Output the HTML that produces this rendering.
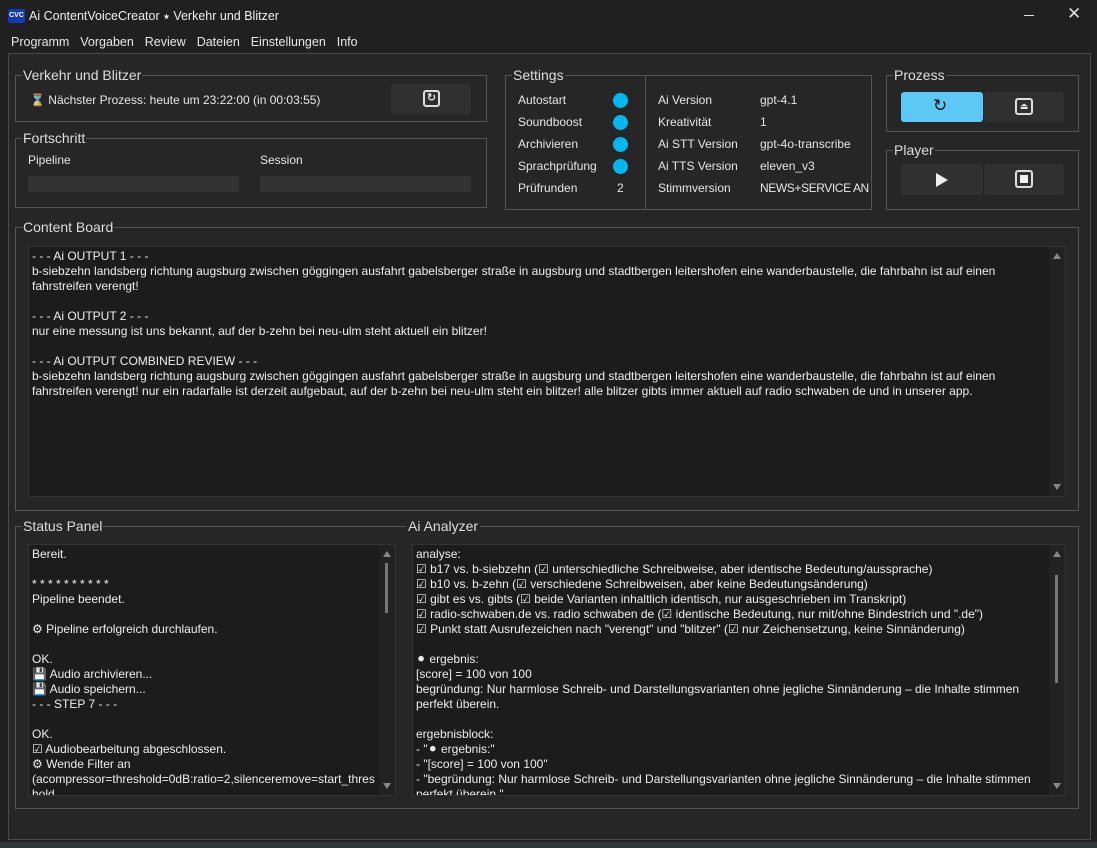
<!DOCTYPE html>
<html><head><meta charset="utf-8"><style>
*{box-sizing:border-box;margin:0;padding:0}
body{width:1097px;height:848px;background:#2e3836;font-family:"Liberation Sans","DejaVu Sans",sans-serif;color:#e6e6e6;font-size:12px;position:relative;overflow:hidden}
.a{position:absolute}
#win{left:0;top:0;width:1097px;height:842px;background:#202020}
#main{left:8px;top:53px;width:1083px;height:787px;background:#262626;border:1px solid #4a4a4a}
.g{position:absolute;border:1px solid #555}
.gl{position:absolute;top:-9px;left:6px;background:#262626;font-size:14px;color:#ddd;padding:0 1px;line-height:16px}
.tb{position:absolute;background:#1c1c1c;border:1px solid #333;font-size:12px;line-height:15px;padding:2px 3px;color:#eee;white-space:pre-wrap;overflow:hidden}
.sb{position:absolute;right:0;top:0;bottom:0;width:16px;background:#222}
.sb .up,.sb .dn{position:absolute;left:4px;width:0;height:0;border-left:4px solid transparent;border-right:4px solid transparent}
.sb .up{top:6px;border-bottom:6px solid #888}
.sb .dn{bottom:6px;border-top:6px solid #888}
.sb .th{position:absolute;left:6px;width:3px;background:#777}
.bar{position:absolute;height:16px;background:#333;border-radius:2px}
.btn{position:absolute;background:#303030;border-radius:3px}
.dot{position:absolute;width:15px;height:15px;border-radius:50%;background:#00b7f0}
.lab{position:absolute;font-size:12px;white-space:nowrap}
</style></head><body>
<div id="win" class="a"></div>
<div class="a" style="left:8px;top:9px;width:17px;height:14px;background:#1438b8;border-radius:2px;font-size:7px;font-weight:bold;color:#fff;text-align:center;line-height:14px">CVC</div>
<div class="a" style="left:29px;top:9px;font-size:12.5px;color:#eee">Ai ContentVoiceCreator ⭑ Verkehr und Blitzer</div>
<div class="a" style="left:1024px;top:15px;width:10px;height:1px;background:#ddd"></div>
<div class="a" style="left:1067px;top:4px;font-size:17px;color:#ddd">✕</div>
<div class="a" style="left:11px;top:35px;font-size:12.5px;word-spacing:2px">Programm&nbsp; Vorgaben&nbsp; Review&nbsp; Dateien&nbsp; Einstellungen&nbsp; Info</div>
<div id="main" class="a"></div>

<div class="g" style="left:15px;top:75px;width:472px;height:47px"><div class="gl">Verkehr und Blitzer</div>
<div class="lab" style="left:14px;top:17px">⌛ Nächster Prozess: heute um 23:22:00 (in 00:03:55)</div>
<div class="btn" style="left:375px;top:8px;width:80px;height:30px"><div class="a" style="left:32px;top:6px;width:17px;height:17px;border:2px solid #ddd;border-radius:3px;font-size:11px;text-align:center;line-height:13px;font-weight:bold">↻</div></div></div>

<div class="g" style="left:15px;top:138px;width:472px;height:70px"><div class="gl">Fortschritt</div>
<div class="lab" style="left:12px;top:14px">Pipeline</div><div class="lab" style="left:244px;top:14px">Session</div>
<div class="bar" style="left:12px;top:37px;width:211px"></div><div class="bar" style="left:244px;top:37px;width:211px"></div></div>

<div class="g" style="left:505px;top:75px;width:367px;height:135px"><div class="gl">Settings</div>
<div class="a" style="left:139px;top:0;width:1px;height:133px;background:#555"></div>
<div class="lab" style="left:12px;top:17px">Autostart</div><div class="dot" style="left:107px;top:17px"></div>
<div class="lab" style="left:12px;top:39px">Soundboost</div><div class="dot" style="left:107px;top:39px"></div>
<div class="lab" style="left:12px;top:61px">Archivieren</div><div class="dot" style="left:107px;top:61px"></div>
<div class="lab" style="left:12px;top:83px">Sprachprüfung</div><div class="dot" style="left:107px;top:83px"></div>
<div class="lab" style="left:12px;top:105px">Prüfrunden</div><div class="lab" style="left:111px;top:105px">2</div>
<div class="lab" style="left:152px;top:17px">Ai Version</div><div class="lab" style="left:254px;top:17px">gpt-4.1</div>
<div class="lab" style="left:152px;top:39px">Kreativität</div><div class="lab" style="left:254px;top:39px">1</div>
<div class="lab" style="left:152px;top:61px">Ai STT Version</div><div class="lab" style="left:254px;top:61px">gpt-4o-transcribe</div>
<div class="lab" style="left:152px;top:83px">Ai TTS Version</div><div class="lab" style="left:254px;top:83px">eleven_v3</div>
<div class="lab" style="left:152px;top:105px">Stimmversion</div><div class="lab" style="left:254px;top:105px;letter-spacing:-0.4px">NEWS+SERVICE AN</div></div>

<div class="g" style="left:886px;top:75px;width:193px;height:57px"><div class="gl">Prozess</div>
<div class="btn" style="left:14px;top:16px;width:82px;height:30px;background:#5cc8f5"><div class="a" style="left:32px;top:4px;font-size:17px;color:#111">↻</div></div>
<div class="btn" style="left:97px;top:16px;width:80px;height:30px"><div class="a" style="left:31px;top:6px;width:18px;height:17px;border:2px solid #ddd;border-radius:3px;font-size:9px;text-align:center;line-height:13px">⏏</div></div></div>

<div class="g" style="left:886px;top:150px;width:193px;height:60px"><div class="gl">Player</div>
<div class="btn" style="left:14px;top:13px;width:82px;height:31px"><div class="a" style="left:35px;top:9px;width:0;height:0;border-top:7px solid transparent;border-bottom:7px solid transparent;border-left:12px solid #eee"></div></div>
<div class="btn" style="left:97px;top:13px;width:80px;height:31px"><div class="a" style="left:31px;top:6px;width:18px;height:18px;border:2px solid #ddd;border-radius:3px"><div class="a" style="left:3px;top:3px;width:8px;height:8px;background:#eee"></div></div></div></div>

<div class="g" style="left:15px;top:227px;width:1064px;height:284px"><div class="gl">Content Board</div>
<div class="tb" style="left:12px;top:18px;width:1038px;height:251px;padding-right:38px">- - - Ai OUTPUT 1 - - -
b-siebzehn landsberg richtung augsburg zwischen göggingen ausfahrt gabelsberger straße in augsburg und stadtbergen leitershofen eine wanderbaustelle, die fahrbahn ist auf einen fahrstreifen verengt!

- - - Ai OUTPUT 2 - - -
nur eine messung ist uns bekannt, auf der b-zehn bei neu-ulm steht aktuell ein blitzer!

- - - Ai OUTPUT COMBINED REVIEW - - -
b-siebzehn landsberg richtung augsburg zwischen göggingen ausfahrt gabelsberger straße in augsburg und stadtbergen leitershofen eine wanderbaustelle, die fahrbahn ist auf einen fahrstreifen verengt! nur ein radarfalle ist derzeit aufgebaut, auf der b-zehn bei neu-ulm steht ein blitzer! alle blitzer gibts immer aktuell auf radio schwaben de und in unserer app.<div class="sb"><div class="up"></div><div class="dn"></div></div></div></div>

<div class="g" style="left:15px;top:526px;width:1064px;height:283px"><div class="gl">Status Panel</div>
<div class="a" style="left:390px;top:-9px;background:#262626;font-size:14px;color:#ddd;padding:0 2px;line-height:16px">Ai Analyzer</div>
<div class="tb" style="left:12px;top:17px;width:368px;height:252px;padding-right:20px">Bereit.

* * * * * * * * * *
Pipeline beendet.

⚙ Pipeline erfolgreich durchlaufen.

OK.
💾 Audio archivieren...
💾 Audio speichern...
- - - STEP 7 - - -

OK.
☑ Audiobearbeitung abgeschlossen.
⚙ Wende Filter an
(acompressor=threshold=0dB:ratio=2,silenceremove=start_thres hold<div class="sb"><div class="up"></div><div class="th" style="top:18px;height:50px"></div><div class="dn"></div></div></div>
<div class="tb" style="left:396px;top:17px;width:654px;height:252px;padding-right:20px">analyse:
☑ b17 vs. b-siebzehn (☑ unterschiedliche Schreibweise, aber identische Bedeutung/aussprache)
☑ b10 vs. b-zehn (☑ verschiedene Schreibweisen, aber keine Bedeutungsänderung)
☑ gibt es vs. gibts (☑ beide Varianten inhaltlich identisch, nur ausgeschrieben im Transkript)
☑ radio-schwaben.de vs. radio schwaben de (☑ identische Bedeutung, nur mit/ohne Bindestrich und ".de")
☑ Punkt statt Ausrufezeichen nach "verengt" und "blitzer" (☑ nur Zeichensetzung, keine Sinnänderung)

⚫ ergebnis:
[score] = 100 von 100
begründung: Nur harmlose Schreib- und Darstellungsvarianten ohne jegliche Sinnänderung – die Inhalte stimmen perfekt überein.

ergebnisblock:
- "⚫ ergebnis:"
- "[score] = 100 von 100"
- "begründung: Nur harmlose Schreib- und Darstellungsvarianten ohne jegliche Sinnänderung – die Inhalte stimmen perfekt überein."<div class="sb"><div class="up"></div><div class="th" style="top:30px;height:108px"></div><div class="dn"></div></div></div></div>
</body></html>
